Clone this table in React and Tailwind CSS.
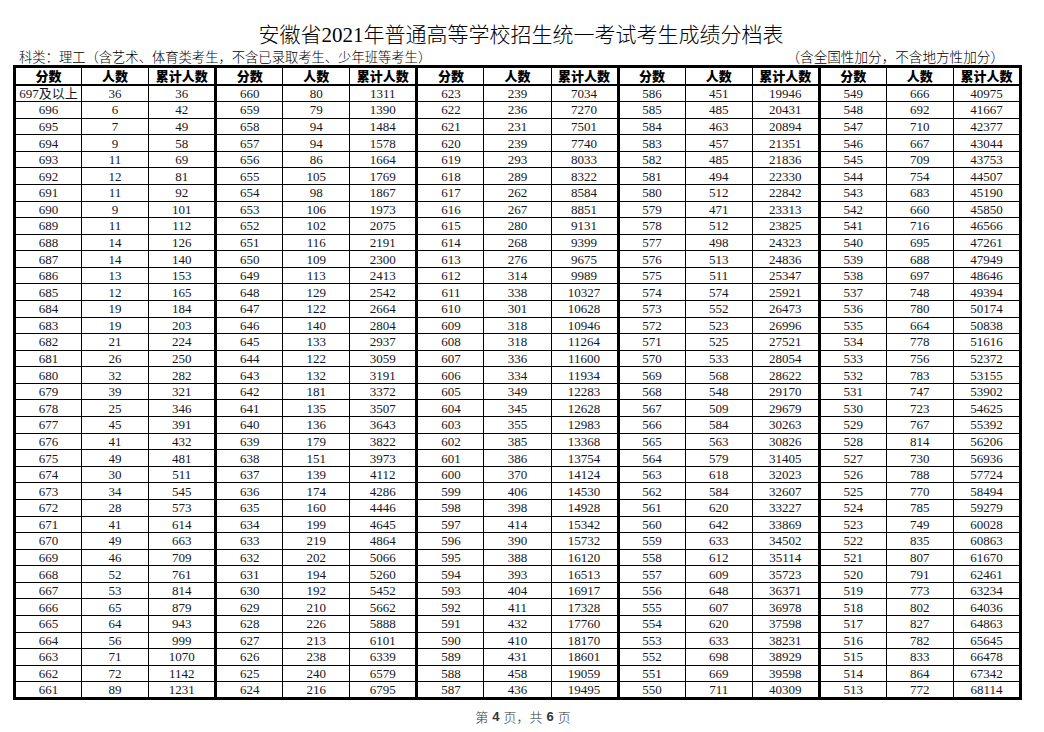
const G = [
  [36,6,7,9,11,12,11,9,11,14,14,13,12,19,19,21,26,32,39,25,45,41,49,30,34,28,41,49,46,52,53,65,64,56,71,72,89],
  [80,79,94,94,86,105,98,106,102,116,109,113,129,122,140,133,122,132,181,135,136,179,151,139,174,160,199,219,202,194,192,210,226,213,238,240,216],
  [239,236,231,239,293,289,262,267,280,268,276,314,338,301,318,318,336,334,349,345,355,385,386,370,406,398,414,390,388,393,404,411,432,410,431,458,436],
  [451,485,463,457,485,494,512,471,512,498,513,511,574,552,523,525,533,568,548,509,584,563,579,618,584,620,642,633,612,609,648,607,620,633,698,669,711],
  [666,692,710,667,709,754,683,660,716,695,688,697,748,780,664,778,756,783,747,723,767,814,730,788,770,785,749,835,807,791,773,802,827,782,833,864,772],
];
const STARTS = [697, 660, 623, 586, 549];

function buildRows() {
  const cum = [];
  let total = 0;
  G.forEach((g, gi) => {
    cum[gi] = g.map((c) => (total += c));
  });
  const rows = [];
  for (let i = 0; i < 37; i++) {
    const cells = [];
    for (let gi = 0; gi < 5; gi++) {
      const score = gi === 0 && i === 0 ? "697及以上" : String(STARTS[gi] - i);
      cells.push(score, String(G[gi][i]), String(cum[gi][i]));
    }
    rows.push(cells);
  }
  return rows;
}

const HEAD = ["分数", "人数", "累计人数"];

export default function App() {
  const rows = buildRows();
  return (
    <div className="w-[1044px] h-[732px] bg-white text-black font-['Liberation_Serif','Noto_Sans_CJK_SC',serif]">
      <div className="pt-[25px] text-center text-[21px] leading-[21px] pr-[2px] font-light">
        安徽省2021年普通高等学校招生统一考试考生成绩分档表
      </div>
      <div className="mt-[6px] ml-[13px] w-[1009px] h-[13px] flex justify-between items-end leading-[14px] pl-[6px] pr-[18px] font-light">
        <span className="text-[13.3px]">科类：理工（含艺术、体育类考生，不含已录取考生、少年班等考生）</span>
        <span className="text-[13.6px]">（含全国性加分，不含地方性加分）</span>
      </div>
      <table className="relative ml-[13px] w-[1009px] table-fixed border-collapse border-[3px] border-black">
        <thead>
          <tr className="h-[18.5px]">
            {Array.from({ length: 15 }).map((_, j) => (
              <th
                key={j}
                className={
                  j % 3 === 2 && j < 14
                    ? "p-0 border border-black border-b-2 border-r-[3px] text-[13px] leading-[14px] font-black font-['Noto_Sans_CJK_SC',sans-serif]"
                    : "p-0 border border-black border-b-2 text-[13px] leading-[14px] font-black font-['Noto_Sans_CJK_SC',sans-serif]"
                }
              >
                {HEAD[j % 3]}
              </th>
            ))}
          </tr>
        </thead>
        <tbody>
          {rows.map((r, i) => (
            <tr key={i} className="h-[16.58px]">
              {r.map((v, j) => (
                <td
                  key={j}
                  className={
                    j % 3 === 2 && j < 14
                      ? "p-0 border border-black border-r-[3px] text-center text-[13px] leading-[13px] text-[#161622]"
                      : "p-0 border border-black text-center text-[13px] leading-[13px] text-[#161622]"
                  }
                >
                  {v}
                </td>
              ))}
            </tr>
          ))}
        </tbody>
      </table>
      <div className="mt-[10px] flex justify-center gap-[4px] text-[13px] leading-[14px] text-[#333] font-['Noto_Sans_CJK_SC',sans-serif] font-light pl-[2px]">
        <span>第</span>
        <span className="font-bold font-['Liberation_Sans',sans-serif]">4</span>
        <span>页，共</span>
        <span className="font-bold font-['Liberation_Sans',sans-serif]">6</span>
        <span>页</span>
      </div>
    </div>
  );
}
